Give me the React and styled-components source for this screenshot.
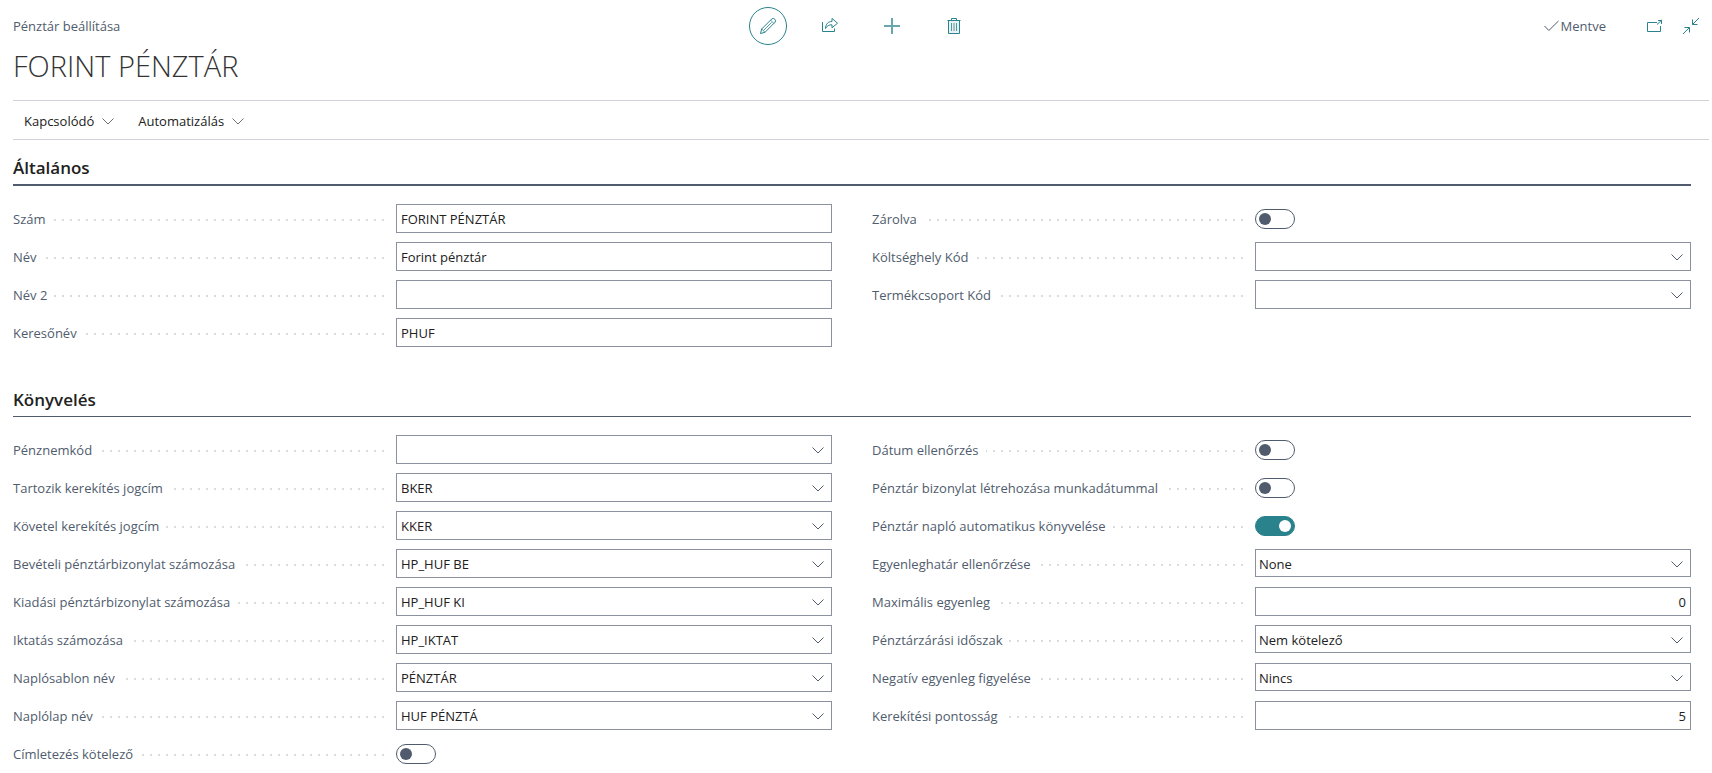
import { useState } from 'react';
import styled, { createGlobalStyle } from 'styled-components';

const TEAL = '#2a828c';
const SLATE = '#505c6d';
const BORDER = '#8c919f';
const TEXT = '#212121';
const FONT = '"Open Sans", "Noto Sans", sans-serif';

const GlobalStyle = createGlobalStyle`
  * {
    box-sizing: border-box;
  }

  body {
    margin: 0;
    background: #fff;
    color: ${TEXT};
    font-family: ${FONT};
    font-size: 13px;
    line-height: 20px;
  }

  button, input, select {
    font: inherit;
    color: inherit;
  }
`;

const Page = styled.main`
  padding: 7px 3px 8px 13px;
`;

const TopBar = styled.header`
  display: grid;
  grid-template-columns: 1fr auto 1fr;
  align-items: center;
`;

const Caption = styled.span`
  color: ${SLATE};
`;

const Tools = styled.div`
  display: flex;
  gap: 24px;
`;

const IconButton = styled.button`
  display: flex;
  align-items: center;
  justify-content: center;
  width: ${({ $small }) => ($small ? '18px' : '38px')};
  height: 38px;
  padding: 0;
  border: ${({ $active }) => ($active ? `1px solid ${TEAL}` : '0')};
  border-radius: ${({ $small }) => ($small ? '0' : '50%')};
  background: none;
  color: ${TEAL};
  cursor: pointer;
`;

const Status = styled.div`
  display: flex;
  align-items: center;
  justify-content: flex-end;
  gap: 18px;
  padding-right: 9px;
`;

const Saved = styled.span`
  display: flex;
  align-items: center;
  gap: 2px;
  margin-right: 22px;
  color: ${SLATE};
`;

const Title = styled.h1`
  margin: 0;
  padding: 1px 0 14px;
  color: #333;
  font-size: 29px;
  font-weight: 300;
  line-height: 40px;
`;

const ActionBar = styled.nav`
  display: flex;
  gap: 24px;
  padding: 0 11px;
  border-top: 1px solid #d0d4d9;
  border-bottom: 1px solid #d0d4d9;
`;

const MenuButton = styled.button`
  display: flex;
  align-items: center;
  gap: 8px;
  height: 38px;
  padding: 2px 0 0;
  border: 0;
  background: none;
  cursor: pointer;

  > svg {
    color: #6b6f76;
  }
`;

const FastTab = styled.section`
  padding: 0 18px ${({ $last }) => ($last ? '0' : '25px')} 0;
`;

const FastTabTitle = styled.h2`
  margin: 0;
  padding: 16px 0 4px;
  border-bottom: ${({ $first }) => ($first ? '2px' : '1px')} solid ${SLATE};
  font-size: 17px;
  font-weight: 600;
  line-height: 24px;
`;

const Columns = styled.div`
  display: grid;
  grid-template-columns: 1fr 1fr;
  gap: 40px;
  padding-top: 18px;
`;

const Column = styled.div`
  display: flex;
  flex-direction: column;
  gap: 9px;
`;

const Row = styled.div`
  display: grid;
  grid-template-columns: 383fr 436fr;
  height: 29px;
`;

// The dots run the full width; the caption covers the ones behind it
const Label = styled.label`
  display: flex;
  align-items: center;
  margin-right: 12px;
  background: linear-gradient(to left, #dcdcdc 2px, transparent 2px) right 15px / 8px 2px repeat-x;
  color: ${SLATE};
  white-space: nowrap;
`;

const LabelText = styled.span`
  padding-right: 7px;
  background: #fff;
`;

const Box = styled.div`
  display: flex;
  height: ${({ $height }) => $height || 29}px;
  border: 1px solid ${BORDER};
`;

const TextInput = styled.input`
  flex: 1;
  min-width: 0;
  padding: 0 4px;
  border: 0;
  outline: 0;
  background: none;
  text-align: ${({ $numeric }) => ($numeric ? 'right' : 'left')};
`;

const LookupButton = styled.button`
  display: flex;
  align-items: center;
  padding: 0 7px;
  border: 0;
  background: none;
  color: ${SLATE};
  cursor: pointer;
`;

const SelectBox = styled(Box)`
  display: grid;
  align-items: center;
  padding-top: 2px;

  > * {
    grid-area: 1 / 1;
  }

  > svg {
    justify-self: end;
    margin-right: 7px;
    color: ${SLATE};
    pointer-events: none;
  }
`;

const Select = styled.select`
  width: 100%;
  height: 100%;
  padding: 0 24px 0 3px;
  border: 0;
  outline: 0;
  appearance: none;
  background: none;
`;

const Switch = styled.input`
  appearance: none;
  display: flex;
  align-items: center;
  align-self: center;
  justify-content: flex-start;
  width: 40px;
  height: 20px;
  margin: 0;
  padding: 0 3px;
  border: 1px solid ${SLATE};
  border-radius: 10px;
  cursor: pointer;

  &::before {
    content: '';
    width: 12px;
    height: 12px;
    border-radius: 50%;
    background: ${SLATE};
  }

  &:checked {
    justify-content: flex-end;
    border-color: ${TEAL};
    background: ${TEAL};
  }

  &:checked::before {
    background: #fff;
  }
`;

const Svg = ({ width = 18, height = 18, children }) => (
  <svg
    width={width}
    height={height}
    viewBox={`0 0 ${width} ${height}`}
    fill="none"
    stroke="currentColor"
    aria-hidden="true"
  >
    {children}
  </svg>
);

const Chevron = () => (
  <Svg width={12} height={8}>
    <path d="M0.5 1.5L6 7L11.5 1.5" />
  </Svg>
);

const PencilIcon = () => (
  <Svg>
    <path d="M1.5 16.5L2.7 12L12.8 1.9Q14.3 0.7 15.8 2.2Q17.3 3.7 16.1 5.2L6 15.3Z" />
    <path d="M11.6 3.1L14.9 6.4M2.7 12L6 15.3M4.6 13.4L12.6 5.4" strokeWidth="0.8" />
  </Svg>
);

const ShareIcon = () => (
  <Svg>
    <path d="M1.5 5V14.5H13.5V11.5" />
    <path d="M4.5 11.5C4.8 6.8 7 4.6 11 4.5V1.4L16.5 6.2L11 10.8V7.8C8 7.7 6 8.8 4.5 11.5Z" />
  </Svg>
);

const PlusIcon = () => (
  <Svg width={16} height={16}>
    <path d="M8 0V16M0 8H16" strokeWidth="2" opacity="0.7" />
  </Svg>
);

const TrashIcon = () => (
  <Svg>
    <path d="M3.5 4V16.5H14.5V4" fill="currentColor" fillOpacity="0.1" />
    <path d="M2.5 3.5H15.5M6.5 3V1.5H11.5V3" />
    <path d="M6.5 6V14M9 6V14M11.5 6V14" strokeWidth="0.8" />
  </Svg>
);

const CheckIcon = () => (
  <Svg width={15} height={12}>
    <path d="M0.5 6L4.8 10.5L14.5 1" />
  </Svg>
);

const PopOutIcon = () => (
  <Svg width={16} height={14}>
    <path d="M10 3.5H0.5V12.5H13.5V7" />
    <path d="M10 5.5L15 0.8M11 1.5H14.5V5" />
  </Svg>
);

const CollapseIcon = () => (
  <Svg>
    <path d="M17 1L10.5 7.5M10.5 2.5V7.5H15.5" />
    <path d="M1 17L7.5 10.5M2.5 10.5H7.5V15.5" />
  </Svg>
);

const general = [
  [
    { id: 'no', label: 'Szám', value: 'FORINT PÉNZTÁR' },
    { id: 'name', label: 'Név', value: 'Forint pénztár' },
    { id: 'name2', label: 'Név 2', value: '' },
    { id: 'search', label: 'Keresőnév', value: 'PHUF' },
  ],
  [
    { id: 'blocked', label: 'Zárolva', type: 'switch', value: false },
    { id: 'department', label: 'Költséghely Kód', type: 'lookup', value: '' },
    { id: 'product', label: 'Termékcsoport Kód', type: 'lookup', value: '' },
  ],
];

const posting = [
  [
    { id: 'currency', label: 'Pénznemkód', type: 'lookup', value: '' },
    { id: 'debit', label: 'Tartozik kerekítés jogcím', type: 'lookup', value: 'BKER' },
    { id: 'credit', label: 'Követel kerekítés jogcím', type: 'lookup', value: 'KKER' },
    { id: 'receipt', label: 'Bevételi pénztárbizonylat számozása', type: 'lookup', value: 'HP_HUF BE' },
    { id: 'payment', label: 'Kiadási pénztárbizonylat számozása', type: 'lookup', value: 'HP_HUF KI' },
    { id: 'filing', label: 'Iktatás számozása', type: 'lookup', value: 'HP_IKTAT' },
    { id: 'template', label: 'Naplósablon név', type: 'lookup', value: 'PÉNZTÁR' },
    { id: 'batch', label: 'Naplólap név', type: 'lookup', value: 'HUF PÉNZTÁ' },
    { id: 'denomination', label: 'Címletezés kötelező', type: 'switch', value: false },
  ],
  [
    { id: 'dateCheck', label: 'Dátum ellenőrzés', type: 'switch', value: false },
    { id: 'workDate', label: 'Pénztár bizonylat létrehozása munkadátummal', type: 'switch', value: false },
    { id: 'autoPost', label: 'Pénztár napló automatikus könyvelése', type: 'switch', value: true },
    { id: 'limitCheck', label: 'Egyenleghatár ellenőrzése', type: 'select', value: 'None' },
    { id: 'maxBalance', label: 'Maximális egyenleg', type: 'number', value: '0' },
    { id: 'closing', label: 'Pénztárzárási időszak', type: 'select', value: 'Nem kötelező' },
    { id: 'negative', label: 'Negatív egyenleg figyelése', type: 'select', value: 'Nincs' },
    { id: 'precision', label: 'Kerekítési pontosság', type: 'number', value: '5' },
  ],
];

function Control({ id, label, type, value }) {
  const [current, setCurrent] = useState(value);
  const onChange = (e) => setCurrent(e.target.value);

  if (type === 'switch') {
    return (
      <Switch
        id={id}
        type="checkbox"
        role="switch"
        checked={current}
        onChange={(e) => setCurrent(e.target.checked)}
      />
    );
  }

  if (type === 'select') {
    return (
      <SelectBox $height={28}>
        <Select id={id} value={current} onChange={onChange}>
          <option>{value}</option>
        </Select>
        <Chevron />
      </SelectBox>
    );
  }

  return (
    <Box>
      <TextInput
        id={id}
        type="text"
        value={current}
        onChange={onChange}
        $numeric={type === 'number'}
      />
      {type === 'lookup' && (
        <LookupButton type="button" aria-label={label}>
          <Chevron />
        </LookupButton>
      )}
    </Box>
  );
}

function Fields({ columns }) {
  return (
    <Columns>
      {columns.map((fields) => (
        <Column key={fields[0].id}>
          {fields.map((field) => (
            <Row key={field.id}>
              <Label htmlFor={field.id}>
                <LabelText>{field.label}</LabelText>
              </Label>
              <Control {...field} />
            </Row>
          ))}
        </Column>
      ))}
    </Columns>
  );
}

export default function App() {
  return (
    <>
      <GlobalStyle />
      <Page>
        <TopBar>
          <Caption>Pénztár beállítása</Caption>
          <Tools>
            <IconButton type="button" aria-label="Szerkesztés" $active><PencilIcon /></IconButton>
            <IconButton type="button" aria-label="Megosztás"><ShareIcon /></IconButton>
            <IconButton type="button" aria-label="Új"><PlusIcon /></IconButton>
            <IconButton type="button" aria-label="Törlés"><TrashIcon /></IconButton>
          </Tools>
          <Status>
            <Saved>
              <CheckIcon />
              Mentve
            </Saved>
            <IconButton type="button" aria-label="Megnyitás új ablakban" $small><PopOutIcon /></IconButton>
            <IconButton type="button" aria-label="Összecsukás" $small><CollapseIcon /></IconButton>
          </Status>
        </TopBar>
        <Title>FORINT PÉNZTÁR</Title>
        <ActionBar>
          <MenuButton type="button">
            Kapcsolódó
            <Chevron />
          </MenuButton>
          <MenuButton type="button">
            Automatizálás
            <Chevron />
          </MenuButton>
        </ActionBar>
        <FastTab>
          <FastTabTitle $first>Általános</FastTabTitle>
          <Fields columns={general} />
        </FastTab>
        <FastTab $last>
          <FastTabTitle>Könyvelés</FastTabTitle>
          <Fields columns={posting} />
        </FastTab>
      </Page>
    </>
  );
}
